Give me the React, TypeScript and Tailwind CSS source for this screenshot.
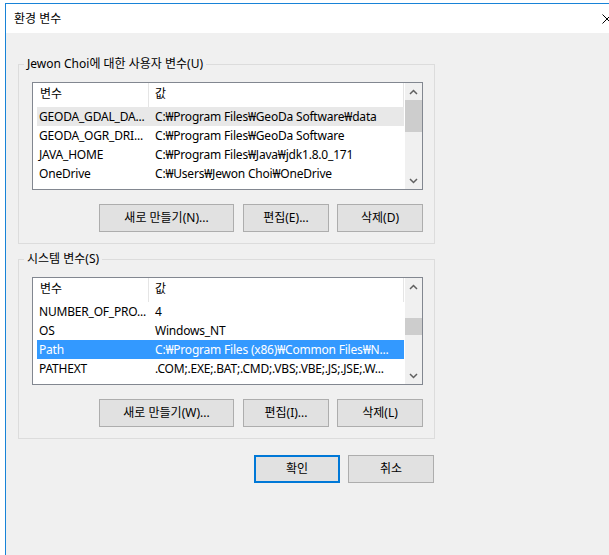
import React from "react";

type Row = { name: string; value: string; state?: "inactive" | "active" };

interface ListProps {
  rows: Row[];
  thumbTop: number;
  thumbHeight: number;
}

const userRows: Row[] = [
  { name: "GEODA_GDAL_DA...", value: "C:₩Program Files₩GeoDa Software₩data", state: "inactive" },
  { name: "GEODA_OGR_DRI...", value: "C:₩Program Files₩GeoDa Software" },
  { name: "JAVA_HOME", value: "C:₩Program Files₩Java₩jdk1.8.0_171" },
  { name: "OneDrive", value: "C:₩Users₩Jewon Choi₩OneDrive" },
];

const systemRows: Row[] = [
  { name: "NUMBER_OF_PRO...", value: "4" },
  { name: "OS", value: "Windows_NT" },
  { name: "Path", value: "C:₩Program Files (x86)₩Common Files₩N...", state: "active" },
  { name: "PATHEXT", value: ".COM;.EXE;.BAT;.CMD;.VBS;.VBE;.JS;.JSE;.W..." },
];

const Chevron = ({ up }: { up?: boolean }) => (
  <svg width="9" height="6" viewBox="0 0 9 6" className="block">
    <polyline
      points={up ? "1,5 4.5,1.5 8,5" : "1,1 4.5,4.5 8,1"}
      fill="none"
      stroke="#606060"
      strokeWidth="1.5"
    />
  </svg>
);

const ListView = ({ rows, thumbTop, thumbHeight }: ListProps) => (
  <div className="w-[391px] h-[108px] border border-[#828790] bg-white flex overflow-hidden">
    <div className="flex-1 flex flex-col overflow-hidden">
      {/* header */}
      <div className="h-[24px] flex shrink-0">
        <div className="w-[115px] pl-[7px] pt-[3px] leading-[16px]">변수</div>
        <div className="w-px bg-[#e5e5e5]" />
        <div className="w-[254px] pl-[6px] pt-[3px] leading-[16px]">값</div>
        <div className="w-px bg-[#e5e5e5]" />
      </div>
      {rows.map((row) => (
        <div
          key={row.name}
          className={`ml-[4px] w-[367px] h-[19px] shrink-0 flex items-center whitespace-nowrap overflow-hidden tracking-[-0.2px] ${
            row.state === "active"
              ? "bg-[#3399ff] text-white"
              : row.state === "inactive"
              ? "bg-[#e8e8e8]"
              : ""
          }`}
        >
          <div className="w-[112px] pl-[2px] overflow-hidden">{row.name}</div>
          <div className="flex-1 pl-[6px] overflow-hidden">{row.value}</div>
        </div>
      ))}
    </div>
    {/* scrollbar */}
    <div className="w-[17px] bg-[#f0f0f0] flex flex-col">
      <div className="h-[17px] flex items-center justify-center">
        <Chevron up />
      </div>
      <div className="flex-1">
        <div className="bg-[#cdcdcd]" style={{ marginTop: thumbTop, height: thumbHeight }} />
      </div>
      <div className="h-[17px] flex items-center justify-center">
        <Chevron />
      </div>
    </div>
  </div>
);

const Button = ({ label, width, primary }: { label: string; width: string; primary?: boolean }) => (
  <button
    className={`${width} h-[28px] bg-[#e1e1e1] flex items-center justify-center leading-[16px] ${
      primary ? "border-2 border-[#0078d7]" : "border border-[#adadad]"
    }`}
  >
    {label}
  </button>
);

const Group = ({
  title,
  rows,
  thumbTop,
  thumbHeight,
  buttons,
  className,
}: {
  title: string;
  rows: Row[];
  thumbTop: number;
  thumbHeight: number;
  buttons: string[];
  className: string;
}) => (
  <fieldset className={`ml-[12px] w-[417px] border border-[#dcdcdc] ${className}`}>
    <legend className="ml-[5px] px-[3px] leading-[16px]">{title}</legend>
    <div className="pl-[13px] pr-[11px] pt-[10px] pb-[11px]">
      <ListView rows={rows} thumbTop={thumbTop} thumbHeight={thumbHeight} />
      <div className="mt-[14px] flex justify-end">
        <Button label={buttons[0]} width="w-[135px]" />
        <div className="w-[9px]" />
        <Button label={buttons[1]} width="w-[86px]" />
        <div className="w-[8px]" />
        <Button label={buttons[2]} width="w-[86px]" />
      </div>
    </div>
  </fieldset>
);

export default function App() {
  return (
    <div className="w-[609px] h-[555px] bg-white overflow-hidden pt-[3px] pl-[5px] text-[12px] text-black font-['Segoe_UI','Noto_Sans','Noto_Sans_CJK_KR',sans-serif]">
      <div className="w-[616px] h-[560px] border-l border-t border-[#1883d7] bg-[#f0f0f0] flex flex-col">
        {/* title bar */}
        <div className="h-[29px] bg-white flex items-center justify-between pl-[8px] pr-[9px] shrink-0">
          <span className="leading-[16px]">환경 변수</span>
          <svg width="10" height="10" viewBox="0 0 10 10" className="block">
            <path d="M0.5 0.5 L9.5 9.5 M9.5 0.5 L0.5 9.5" stroke="#000" strokeWidth="1" />
          </svg>
        </div>

        <Group
          title="Jewon Choi에 대한 사용자 변수(U)"
          rows={userRows}
          thumbTop={0}
          thumbHeight={32}
          buttons={["새로 만들기(N)...", "편집(E)...", "삭제(D)"]}
          className="mt-[23px]"
        />
        <Group
          title="시스템 변수(S)"
          rows={systemRows}
          thumbTop={23}
          thumbHeight={17}
          buttons={["새로 만들기(W)...", "편집(I)...", "삭제(L)"]}
          className="mt-[7px]"
        />

        <div className="ml-[12px] w-[417px] mt-[16px] pr-[1px] flex justify-end gap-[8px]">
          <Button label="확인" width="w-[86px]" primary />
          <Button label="취소" width="w-[86px]" />
        </div>
      </div>
    </div>
  );
}
